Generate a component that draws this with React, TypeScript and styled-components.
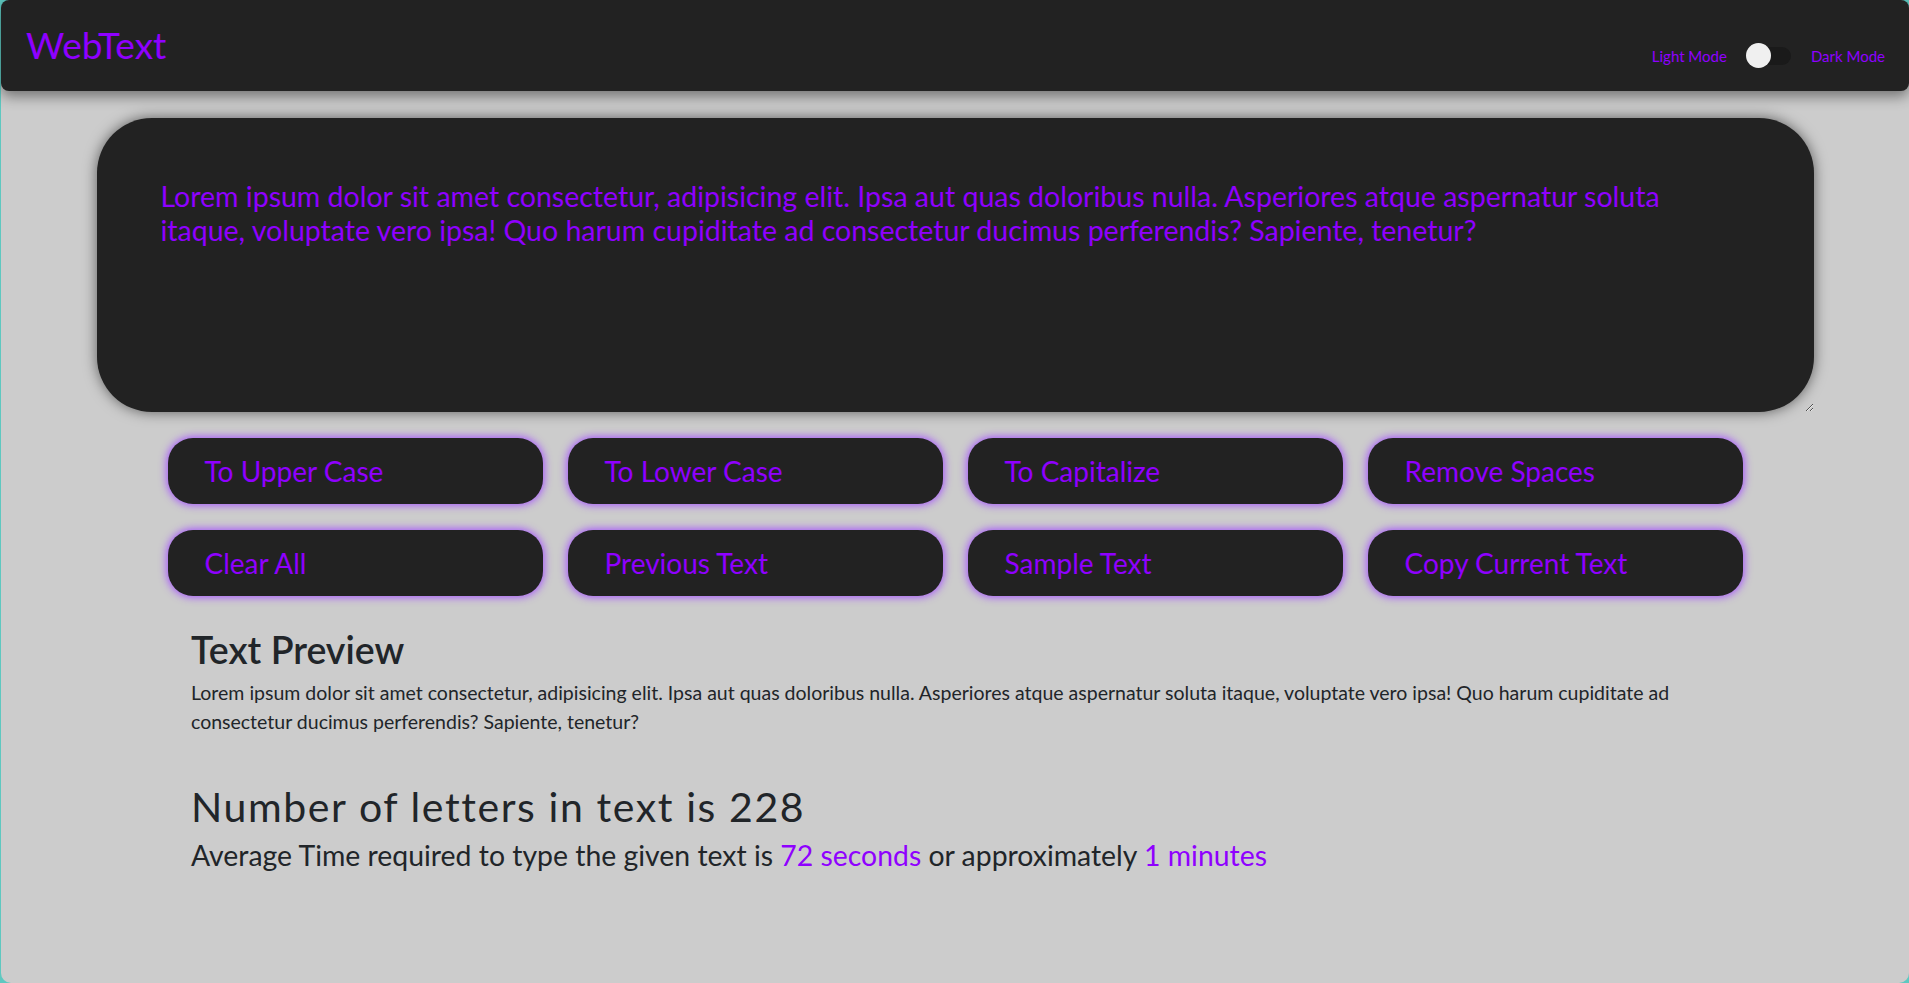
import React from "react";
import styled, { createGlobalStyle } from "styled-components";

const PURPLE = "#8f00ff";
const TEXT = "Lorem ipsum dolor sit amet consectetur, adipisicing elit. Ipsa aut quas doloribus nulla. Asperiores atque aspernatur soluta itaque, voluptate vero ipsa! Quo harum cupiditate ad consectetur ducimus perferendis? Sapiente, tenetur?";

const GlobalStyle = createGlobalStyle`
  html { background: #5ec8c0; }
  body {
    margin: 0;
    font-family: Lato, "Open Sans", sans-serif;
    color: #212529;
  }
  * { box-sizing: border-box; }
`;

const Page = styled.div`
  min-height: 983px;
  background: #cccccc;
  border-radius: 10px;
  margin-left: 1px;
`;

const Navbar = styled.nav`
  height: 91px;
  background: #222222;
  border-radius: 8px;
  display: flex;
  align-items: center;
  justify-content: space-between;
  padding: 0 24px 0 25px;
  box-shadow: 0 5px 14px rgba(0, 0, 0, 0.45);
`;

const Brand = styled.div`
  color: ${PURPLE};
  font-size: 37px;
  line-height: 1;
  margin-top: -2px;
`;

const ToggleGroup = styled.div`
  display: flex;
  align-items: center;
  gap: 20px;
  margin-top: 20px;
`;

const ModeLabel = styled.span`
  color: ${PURPLE};
  font-size: 15px;
`;

const Track = styled.div`
  position: relative;
  width: 44px;
  height: 18px;
  border-radius: 9px;
  background: #1a1a1a;
`;

const Knob = styled.div`
  position: absolute;
  left: -1px;
  top: -3.5px;
  width: 25px;
  height: 25px;
  border-radius: 50%;
  background: #f0f0f0;
`;

const Main = styled.main`
  display: flex;
  flex-direction: column;
  align-items: center;
  padding-top: 27px;
`;

const Editor = styled.textarea`
  width: 1717px;
  height: 294px;
  padding: 61px 113px 60px 64px;
  background: #222222;
  color: ${PURPLE};
  font-family: Lato, "Open Sans", sans-serif;
  font-size: 28.5px;
  line-height: 34px;
  border: none;
  border-radius: 55px;
  box-shadow: 0 0 14px rgba(0, 0, 0, 0.55);
  outline: none;
  resize: both;
`;

const ButtonGrid = styled.div`
  display: grid;
  grid-template-columns: repeat(4, 375px);
  column-gap: 25px;
  row-gap: 26px;
  margin-top: 26px;
`;

const ActionButton = styled.button`
  height: 66px;
  padding: 0 37px;
  text-align: left;
  background: #222222;
  color: ${PURPLE};
  font-family: Lato, "Open Sans", sans-serif;
  font-size: 28px;
  border: none;
  border-radius: 25px;
  box-shadow: 0 0 9px 1px #a24bff;
  cursor: pointer;
`;

const Section = styled.section`
  align-self: flex-start;
  width: 1530px;
  margin-left: 190px;
  margin-top: 31px;
  display: flex;
  flex-direction: column;
`;

const Heading = styled.h2`
  margin: 0;
  font-size: 37.5px;
  font-weight: 600;
  line-height: 1.2;
`;

const Preview = styled.p`
  margin: 6px 0 0;
  font-size: 19.5px;
  line-height: 29px;
`;

const Count = styled.h2`
  margin: 46px 0 0;
  font-size: 41px;
  font-weight: 400;
  letter-spacing: 1.6px;
  line-height: 1.2;
`;

const Stat = styled.p`
  margin: 7px 0 0;
  font-size: 28.4px;
  line-height: 1.2;
`;

const Accent = styled.span`
  color: ${PURPLE};
`;

const buttons = [
  "To Upper Case",
  "To Lower Case",
  "To Capitalize",
  "Remove Spaces",
  "Clear All",
  "Previous Text",
  "Sample Text",
  "Copy Current Text",
];

export default function App() {
  return (
    <Page>
      <GlobalStyle />
      <Navbar>
        <Brand>WebText</Brand>
        <ToggleGroup>
          <ModeLabel>Light Mode</ModeLabel>
          <Track>
            <Knob />
          </Track>
          <ModeLabel>Dark Mode</ModeLabel>
        </ToggleGroup>
      </Navbar>
      <Main>
        <Editor defaultValue={TEXT} spellCheck={false} />
        <ButtonGrid>
          {buttons.map((b) => (
            <ActionButton key={b}>{b}</ActionButton>
          ))}
        </ButtonGrid>
        <Section>
          <Heading>Text Preview</Heading>
          <Preview>{TEXT}</Preview>
          <Count>Number of letters in text is 228</Count>
          <Stat>
            Average Time required to type the given text is <Accent>72 seconds</Accent> or approximately{" "}
            <Accent>1 minutes</Accent>
          </Stat>
        </Section>
      </Main>
    </Page>
  );
}
